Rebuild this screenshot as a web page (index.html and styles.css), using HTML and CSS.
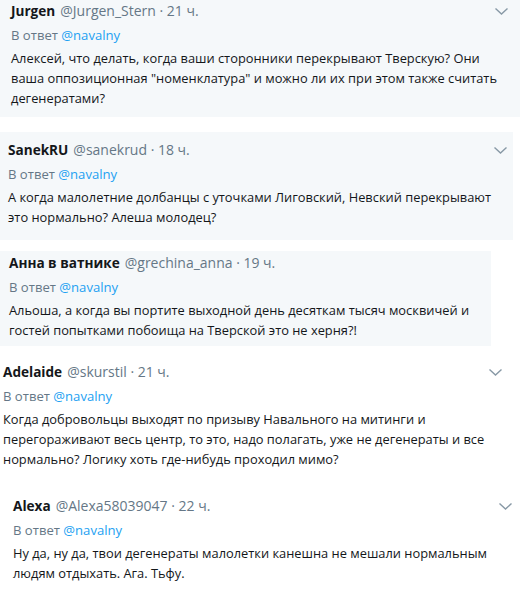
FILE: index.html
```html
<!DOCTYPE html>
<html lang="ru">
<head>
<meta charset="utf-8">
<link rel="stylesheet" href="styles.css">
</head>
<body>
<div class="feed">
  <article class="tweet t1">
    <div class="head"><span class="name">Jurgen</span><span class="meta">@Jurgen_Stern · 21 ч.</span>
      <svg class="caret" viewBox="0 0 13 7"><path d="M0.5 0.5 L6.5 6 L12.5 0.5" /></svg></div>
    <div class="reply">В ответ <span class="link">@navalny</span></div>
    <p class="text">Алексей, что делать, когда ваши сторонники перекрывают Тверскую? Они<br>ваша оппозиционная "номенклатура" и можно ли их при этом также считать<br>дегенератами?</p>
  </article>
  <article class="tweet t2">
    <div class="head"><span class="name">SanekRU</span><span class="meta">@sanekrud · 18 ч.</span>
      <svg class="caret" viewBox="0 0 13 7"><path d="M0.5 0.5 L6.5 6 L12.5 0.5" /></svg></div>
    <div class="reply">В ответ <span class="link">@navalny</span></div>
    <p class="text">А когда малолетние долбанцы с уточками Лиговский, Невский перекрывают<br>это нормально? Алеша молодец?</p>
  </article>
  <article class="tweet t3">
    <div class="head"><span class="name">Анна в ватнике</span><span class="meta">@grechina_anna · 19 ч.</span></div>
    <div class="reply">В ответ <span class="link">@navalny</span></div>
    <p class="text">Альоша, а когда вы портите выходной день десяткам тысяч москвичей и<br>гостей попытками побоища на Тверской это не херня?!</p>
  </article>
  <article class="tweet t4">
    <div class="head"><span class="name">Adelaide</span><span class="meta">@skurstil · 21 ч.</span>
      <svg class="caret" viewBox="0 0 13 7"><path d="M0.5 0.5 L6.5 6 L12.5 0.5" /></svg></div>
    <div class="reply">В ответ <span class="link">@navalny</span></div>
    <p class="text">Когда добровольцы выходят по призыву Навального на митинги и<br>перегораживают весь центр, то это, надо полагать, уже не дегенераты и все<br>нормально? Логику хоть где-нибудь проходил мимо?</p>
  </article>
  <article class="tweet t5">
    <div class="head"><span class="name">Alexa</span><span class="meta">@Alexa58039047 · 22 ч.</span>
      <svg class="caret" viewBox="0 0 13 7"><path d="M0.5 0.5 L6.5 6 L12.5 0.5" /></svg></div>
    <div class="reply">В ответ <span class="link">@navalny</span></div>
    <p class="text">Ну да, ну да, твои дегенераты малолетки канешна не мешали нормальным<br>людям отдыхать. Ага. Тьфу.</p>
  </article>
</div>
</body>
</html>
```
FILE: styles.css
```css
html, body {
  margin: 0;
  padding: 0;
  background: #ffffff;
}
body {
  font-family: "Open Sans", "Noto Sans", sans-serif;
  font-size: 14px;
  line-height: 20px;
  color: #14171a;
}
.feed {
  display: flex;
  flex-direction: column;
  align-items: flex-start;
  width: 524px;
}
.tweet {
  box-sizing: border-box;
}
.head {
  display: flex;
  align-items: center;
  height: 20px;
  white-space: nowrap;
}
.name {
  font-weight: 700;
  font-size: 13.6px;
}
.meta {
  color: #657786;
  margin-left: 5px;
  font-size: 14px;
}
.caret {
  margin-left: auto;
  width: 13px;
  height: 7px;
  fill: none;
  stroke: #8899a6;
  stroke-width: 1.4;
}
.reply {
  margin-top: 4px;
  color: #657786;
  font-size: 13.1px;
  white-space: nowrap;
}
.link {
  color: #1da1f2;
}
.text {
  margin: 3px 0 0;
  font-size: 12.85px;
  white-space: nowrap;
}
.t1 {
  width: 520px;
  background: #f5f8fa;
  padding: 1px 12px 9px 11px;
}
.t2 {
  width: 513px;
  margin-top: 15px;
  background: #f5f8fa;
  padding: 8px 6px 13px 8px;
}
.t3 {
  width: 491px;
  margin-top: 11px;
  background: #f5f8fa;
  padding: 2px 0 6px 9px;
}
.t4 {
  width: 524px;
  margin-top: 16px;
  padding: 0 22px 0 3px;
}
.t5 {
  width: 524px;
  margin-top: 27px;
  padding: 0 12px 0 13px;
}
```
